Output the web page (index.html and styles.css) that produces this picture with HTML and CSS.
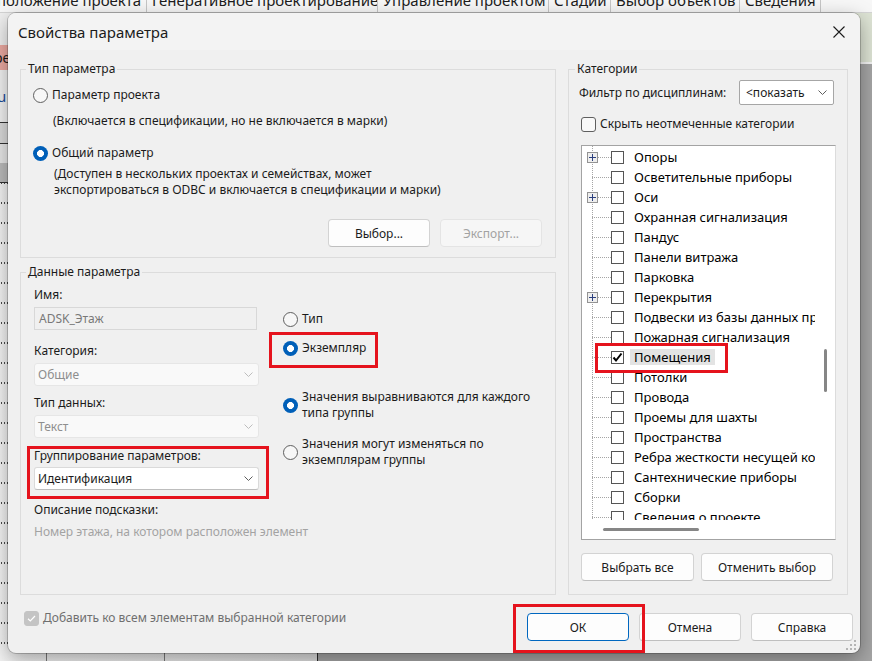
FILE: index.html
```html
<!DOCTYPE html>
<html lang="ru">
<head>
  <meta charset="UTF-8">
  <title>Свойства параметра</title>
  <link rel="stylesheet" href="styles.css">
</head>
<body>
<div class="desktop">
  <div class="ribbon">
    <div class="ribbon-tabs">
      <span class="rtab t1">положение проекта</span>
      <span class="rtab t2">Генеративное проектирование</span>
      <span class="rtab t3">Управление проектом</span>
      <span class="rtab t4">Стадии</span>
      <span class="rtab t5">Выбор объектов</span>
      <span class="rtab t6">Сведения</span>
      <span class="rtab t7"></span>
    </div>
  </div>
  <div class="workspace">
    <div class="browser">
      <div class="b-top"></div>
      <div class="b-pink">ре</div>
      <div class="b-blank">u</div>
      <div class="b-band1"></div>
      <div class="b-band2"></div>
      <div class="b-band3"></div>
      <div class="b-table"></div>
    </div>
    <div class="canvas">
      <div class="c-top"></div>
    </div>
  </div>

  <div class="dialog">
    <div class="titlebar">
      <span class="title">Свойства параметра</span>
      <svg class="close" width="12" height="12" viewBox="0 0 12 12"><path d="M0.5 0.5L11.5 11.5M11.5 0.5L0.5 11.5" stroke="#1b1b1b" stroke-width="1.1"/></svg>
    </div>
    <div class="dialog-body">
      <div class="columns">
        <div class="col-left">
          <fieldset class="group group-type">
            <legend>Тип параметра</legend>
            <label class="radio-row r-project"><span class="radio"></span>Параметр проекта</label>
            <p class="hint h-project">(Включается в спецификации, но не включается в марки)</p>
            <label class="radio-row r-shared"><span class="radio checked"></span>Общий параметр</label>
            <p class="hint h-shared">(Доступен в нескольких проектах и семействах, может<br>экспортироваться в ODBC и включается в спецификации и марки)</p>
            <div class="btn-row">
              <button class="btn">Выбор...</button>
              <button class="btn" disabled>Экспорт...</button>
            </div>
          </fieldset>

          <fieldset class="group group-data">
            <legend>Данные параметра</legend>
            <div class="data-grid">
              <div class="data-fields">
                <div class="field-label l-name">Имя:</div>
                <div class="textbox">ADSK_Этаж</div>
                <div class="field-label l-cat">Категория:</div>
                <div class="combo disabled">Общие<svg class="chev" width="9" height="5" viewBox="0 0 9 5"><path d="M0.5 0.5L4.5 4.5L8.5 0.5" fill="none" stroke="currentColor"/></svg></div>
                <div class="field-label l-type">Тип данных:</div>
                <div class="combo disabled">Текст<svg class="chev" width="9" height="5" viewBox="0 0 9 5"><path d="M0.5 0.5L4.5 4.5L8.5 0.5" fill="none" stroke="currentColor"/></svg></div>
                <div class="marked mark-group">
                  <div class="field-label">Группирование параметров:</div>
                  <div class="combo">Идентификация<svg class="chev" width="9" height="5" viewBox="0 0 9 5"><path d="M0.5 0.5L4.5 4.5L8.5 0.5" fill="none" stroke="currentColor"/></svg></div>
                </div>
                <div class="field-label l-desc">Описание подсказки:</div>
                <div class="placeholder">Номер этажа, на котором расположен элемент</div>
              </div>
              <div class="data-options">
                <label class="radio-row o-type"><span class="radio"></span>Тип</label>
                <label class="radio-row o-inst marked mark-inst"><span class="radio checked"></span>Экземпляр</label>
                <label class="radio-row multi o-align"><span class="radio checked"></span><span>Значения выравниваются для каждого<br>типа группы</span></label>
                <label class="radio-row multi o-vary"><span class="radio"></span><span>Значения могут изменяться по<br>экземплярам группы</span></label>
              </div>
            </div>
          </fieldset>
        </div>

        <fieldset class="group group-cats">
          <legend>Категории</legend>
          <div class="filter-row">
            <span>Фильтр по дисциплинам:</span>
            <div class="combo filter">&lt;показать<svg class="chev" width="9" height="5" viewBox="0 0 9 5"><path d="M0.5 0.5L4.5 4.5L8.5 0.5" fill="none" stroke="currentColor"/></svg></div>
          </div>
          <label class="check-row hide-row"><span class="checkbox"></span>Скрыть неотмеченные категории</label>
          <div class="tree">
            <div class="tree-view">
              <div class="tree-items">
                <div class="node"><span class="gutter"><svg class="plus" width="11" height="11" viewBox="0 0 11 11"><rect x="0.5" y="0.5" width="10" height="10" fill="#eeeeee" stroke="#939393"/><path d="M2 5.5H9M5.5 2V9" stroke="#2b3f7e"/></svg></span><span class="box"></span><span class="name">Опоры</span></div>
                <div class="node"><span class="gutter"></span><span class="box"></span><span class="name">Осветительные приборы</span></div>
                <div class="node"><span class="gutter"><svg class="plus" width="11" height="11" viewBox="0 0 11 11"><rect x="0.5" y="0.5" width="10" height="10" fill="#eeeeee" stroke="#939393"/><path d="M2 5.5H9M5.5 2V9" stroke="#2b3f7e"/></svg></span><span class="box"></span><span class="name">Оси</span></div>
                <div class="node"><span class="gutter"></span><span class="box"></span><span class="name">Охранная сигнализация</span></div>
                <div class="node"><span class="gutter"></span><span class="box"></span><span class="name">Пандус</span></div>
                <div class="node"><span class="gutter"></span><span class="box"></span><span class="name">Панели витража</span></div>
                <div class="node"><span class="gutter"></span><span class="box"></span><span class="name">Парковка</span></div>
                <div class="node"><span class="gutter"><svg class="plus" width="11" height="11" viewBox="0 0 11 11"><rect x="0.5" y="0.5" width="10" height="10" fill="#eeeeee" stroke="#939393"/><path d="M2 5.5H9M5.5 2V9" stroke="#2b3f7e"/></svg></span><span class="box"></span><span class="name">Перекрытия</span></div>
                <div class="node"><span class="gutter"></span><span class="box"></span><span class="name">Подвески из базы данных производителя</span></div>
                <div class="node"><span class="gutter"></span><span class="box"></span><span class="name">Пожарная сигнализация</span></div>
                <div class="node current marked mark-room"><span class="gutter"></span><span class="box"><svg width="11" height="11" viewBox="0 0 11 11"><path d="M1.5 5.5L4 8.5L9.5 1.5" fill="none" stroke="#000" stroke-width="2"/></svg></span><span class="name">Помещения</span></div>
                <div class="node"><span class="gutter"></span><span class="box"></span><span class="name">Потолки</span></div>
                <div class="node"><span class="gutter"></span><span class="box"></span><span class="name">Провода</span></div>
                <div class="node"><span class="gutter"></span><span class="box"></span><span class="name">Проемы для шахты</span></div>
                <div class="node"><span class="gutter"></span><span class="box"></span><span class="name">Пространства</span></div>
                <div class="node"><span class="gutter"></span><span class="box"></span><span class="name">Ребра жесткости несущей конструкции</span></div>
                <div class="node"><span class="gutter"></span><span class="box"></span><span class="name">Сантехнические приборы</span></div>
                <div class="node"><span class="gutter"></span><span class="box"></span><span class="name">Сборки</span></div>
                <div class="node"><span class="gutter"></span><span class="box"></span><span class="name">Сведения о проекте</span></div>
              </div>
            </div>
            <div class="vscroll"><span class="thumb"></span></div>
            <div class="hscroll"><span class="thumb"></span></div>
            <div class="corner"></div>
          </div>
          <div class="cat-buttons">
            <button class="btn b-all">Выбрать все</button>
            <button class="btn b-none">Отменить выбор</button>
          </div>
        </fieldset>
      </div>

      <div class="footer">
        <label class="check-row disabled"><span class="checkbox checked"><svg width="15" height="15" viewBox="0 0 15 15"><path d="M4 7.8L6.3 10L11 5" fill="none" stroke="#fff" stroke-width="1.2"/></svg></span>Добавить ко всем элементам выбранной категории</label>
        <div class="footer-buttons">
          <span class="marked mark-ok"><button class="btn default">ОК</button></span>
          <button class="btn">Отмена</button>
          <button class="btn">Справка</button>
        </div>
      </div>
    </div>
    <svg class="grip" width="11" height="11" viewBox="0 0 11 11">
      <rect x="8" y="0" width="2" height="2" fill="#b4b4b4"/>
      <rect x="4" y="4" width="2" height="2" fill="#b4b4b4"/>
      <rect x="8" y="4" width="2" height="2" fill="#b4b4b4"/>
      <rect x="0" y="8" width="2" height="2" fill="#b4b4b4"/>
      <rect x="4" y="8" width="2" height="2" fill="#b4b4b4"/>
      <rect x="8" y="8" width="2" height="2" fill="#b4b4b4"/>
    </svg>
  </div>
</div>
</body>
</html>
```

FILE: styles.css
```css
* {
  box-sizing: border-box;
}
html, body {
  margin: 0;
  padding: 0;
}
body {
  font-family: "Noto Sans", "Liberation Sans", sans-serif;
  font-size: 12px;
  line-height: 16px;
  color: #1b1b1b;
}
.desktop {
  position: relative;
  width: 872px;
  height: 661px;
  overflow: hidden;
  background: #a4a4a4;
}

/* app behind the dialog */
.ribbon {
  height: 13px;
  overflow: hidden;
  background: #f7f7f7;
  border-bottom: 1px solid #d4d4d4;
}
.ribbon-tabs {
  display: flex;
  margin-top: -10px;
}
.rtab {
  flex: none;
  height: 30px;
  padding-left: 5px;
  font-size: 15px;
  line-height: 20px;
  white-space: nowrap;
  overflow: hidden;
  border-right: 1px solid #c6c6c6;
  color: #1d1d1d;
}
.t1 { width: 147px; padding-left: 0; text-indent: -3px; }
.t2 { width: 231px; }
.t3 { width: 171px; }
.t4 { width: 62px; }
.t5 { width: 129px; }
.t6 { width: 81px; }
.t7 { flex: 1; border-right: none; }

.workspace {
  display: flex;
  height: 648px;
}
.browser {
  width: 318px;
  display: flex;
  flex-direction: column;
  background: #ececec;
  border-right: 1px solid #2a2a2a;
}
.b-top { height: 32px; background: #efefef; }
.b-pink {
  height: 25px;
  background: #eba9a1;
  font-size: 14px;
  line-height: 25px;
  text-indent: -6px;
  overflow: hidden;
}
.b-blank {
  height: 52px;
  background: #f1f1f1;
  color: #1d4f9a;
  font-size: 15px;
  line-height: 52px;
  text-indent: -3px;
  overflow: hidden;
}
.b-band1 {
  height: 22px;
  background: #dadada;
  border-top: 1px solid #333;
  border-bottom: 1px solid #333;
}
.b-band2 { height: 19px; background: #e7e7e7; }
.b-band3 {
  height: 20px;
  background: #bbbbbb;
  border-bottom: 1px solid #333;
}
.b-table {
  flex: 1;
  background:
    radial-gradient(circle, #4a4a4a 0.7px, transparent 1px) 0 10px / 3px 20px,
    linear-gradient(to right, transparent 46px, #7a7a7a 46px 47px, transparent 47px 164px, #7a7a7a 164px 165px, transparent 165px),
    linear-gradient(to right, #f3f3f3, #dedede);
}
.canvas {
  flex: 1;
  background: #a5a5a5;
}
.c-top {
  height: 51px;
  background: #dde3d4;
  border-bottom: 2px solid #f3f3f3;
}

/* dialog window */
.dialog {
  position: absolute;
  left: 8px;
  top: 13px;
  width: 852px;
  height: 640px;
  display: flex;
  flex-direction: column;
  background: #f0f0f0;
  border-radius: 8px;
  overflow: hidden;
  box-shadow: 0 0 0 1px rgba(0, 0, 0, 0.2), 0 6px 20px rgba(0, 0, 0, 0.35);
}
.titlebar {
  flex: none;
  height: 37px;
  display: flex;
  align-items: center;
  justify-content: space-between;
  padding: 0 15px 0 10px;
  background: #f3f3f3;
}
.title {
  font-size: 15px;
  color: #1b1b1b;
}
.dialog-body {
  flex: 1;
  display: flex;
  flex-direction: column;
  padding: 11px 12px 0;
}
.columns {
  display: grid;
  grid-template-columns: 536px 280px;
  column-gap: 12px;
  height: 534px;
}
.col-left {
  display: flex;
  flex-direction: column;
  gap: 6px;
}
.group {
  margin: 0;
  min-width: 0;
  border: 1px solid #dcdcdc;
}
.group legend {
  padding: 0 2px;
  line-height: 16px;
}
.group-type {
  padding: 0 13px 10px 12px;
}
.group-type legend { margin-left: -7px; }
.group-data {
  flex: 1;
  padding: 0 13px;
}
.group-data legend { margin-left: -8px; }
.group-cats {
  padding: 0 13px 13px 10px;
}
.group-cats legend { margin-left: -4px; }

/* radios, checks */
.radio-row {
  display: flex;
  align-items: center;
  gap: 4px;
  height: 20px;
}
.radio-row.multi { height: 32px; }
.radio {
  flex: none;
  width: 15px;
  height: 15px;
  border-radius: 50%;
  border: 1px solid #5f5f5f;
  background: #f7f7f7;
}
.radio.checked {
  border: none;
  background: radial-gradient(circle closest-side, #fff 42%, #005fb8 50%);
}
.check-row {
  display: flex;
  align-items: center;
  gap: 4px;
  height: 16px;
}
.checkbox {
  flex: none;
  width: 15px;
  height: 15px;
  border: 1px solid #5f5f5f;
  border-radius: 3px;
  background: #f9f9f9;
}
.checkbox svg { display: block; margin: -1px; }
.check-row.disabled { color: #6f6f6f; }
.checkbox.checked {
  border-color: #c4c4c4;
  background: #c4c4c4;
}

.r-project { margin-top: 8px; }
.h-project { margin: 8px 0 0 20px; }
.r-shared { margin-top: 14px; }
.h-shared { margin: 3px 0 0 21px; }
.btn-row {
  display: flex;
  justify-content: flex-end;
  gap: 10px;
  margin-top: 21px;
}
.btn {
  width: 102px;
  height: 28px;
  padding: 0;
  font-family: inherit;
  font-size: 12px;
  color: #1b1b1b;
  background: #fdfdfd;
  border: 1px solid #d3d3d3;
  border-bottom-color: #bfbfbf;
  border-radius: 4px;
}
.btn:disabled {
  color: #a2a2a2;
  background: #f6f6f6;
  border-color: #e4e4e4;
}
.btn.default {
  border-color: #0067c0;
}

/* parameter data */
.data-grid {
  display: grid;
  grid-template-columns: 225px 1fr;
  column-gap: 24px;
  align-items: start;
}
.field-label { line-height: 16px; }
.l-name { margin-top: 7px; }
.l-cat { margin-top: 13px; }
.l-type { margin-top: 9px; }
.mark-group { margin-top: 10px; }
.l-desc { margin-top: 12px; }
.textbox {
  width: 223px;
  height: 23px;
  margin-top: 4px;
  padding-left: 4px;
  line-height: 21px;
  color: #787878;
  background: #f0f0f0;
  border: 1px solid #d8d8d8;
}
.combo {
  height: 23px;
  margin-top: 4px;
  padding: 0 5px 0 3px;
  display: flex;
  align-items: center;
  justify-content: space-between;
  color: #1b1b1b;
  background: #ffffff;
  border: 1px solid #dadada;
  border-bottom-color: #bdbdbd;
  border-radius: 3px;
}
.combo .chev {
  flex: none;
  color: #5e5e5e;
}
.combo.disabled {
  color: #8e8e8e;
  background: #f9f9f9;
  border-color: #e6e6e6;
}
.combo.disabled .chev { color: #bdbdbd; }
.mark-group .combo { margin-top: 3px; }
.placeholder {
  margin-top: 6px;
  color: #a3a3a3;
  white-space: nowrap;
}
.o-type { margin-top: 29px; }
.o-inst { margin-top: 9px; }
.o-align { margin-top: 31px; }
.o-vary { margin-top: 15px; }

/* red annotation frames */
.marked {
  position: relative;
}
.marked::after {
  content: "";
  position: absolute;
  border: 3px solid #e5131d;
  pointer-events: none;
}
.mark-group::after { left: -7px; top: -2px; right: -10px; bottom: -9px; }
.mark-inst::after { left: -14px; top: -6px; width: 103px; height: 30px; }
.mark-room::after { left: 13px; top: -4px; width: 127px; height: 24px; }
.mark-ok { display: block; }
.mark-ok::after { left: -14px; top: -9px; width: 126px; height: 43px; }

/* categories */
.filter-row {
  display: flex;
  align-items: center;
  justify-content: space-between;
  height: 25px;
  margin-top: 3px;
}
.combo.filter {
  width: 95px;
  height: 25px;
  margin-top: 0;
  padding: 0 6px;
  border: 1px solid #a6a6a6;
  border-radius: 2px;
}
.hide-row {
  margin-top: 11px;
  padding-left: 2px;
}
.tree {
  display: grid;
  grid-template-columns: 1fr 20px;
  grid-template-rows: 1fr 19px;
  width: 255px;
  height: 395px;
  margin: 13px 0 0 2px;
  background: #ffffff;
  border: 1px solid #a3a3a3;
  border-right-color: #dcdcdc;
}
.tree-view {
  overflow: hidden;
  background: repeating-linear-gradient(to bottom, #a5a5a5 0 1px, transparent 1px 2px) 10px 0 / 1px 100% no-repeat;
}
.tree-items { padding-top: 1px; }
.node {
  display: flex;
  align-items: center;
  height: 20px;
  white-space: nowrap;
  font-size: 13px;
  color: #000;
}
.gutter {
  flex: none;
  width: 29px;
  height: 20px;
  display: flex;
  align-items: center;
  background: repeating-linear-gradient(to right, #a5a5a5 0 1px, transparent 1px 2px) 10px 10px / 19px 1px no-repeat;
}
.plus {
  display: block;
  margin-left: 5px;
}
.box {
  flex: none;
  width: 13px;
  height: 13px;
  border: 1px solid #555;
  background: #fff;
}
.box svg { display: block; }
.name {
  margin-left: 6px;
  padding: 0 4px;
  line-height: 16px;
}
.node.current .name { background: #e3e3e3; }
.vscroll .thumb {
  display: block;
  width: 3px;
  height: 43px;
  margin: 203px 0 0 9px;
  border-radius: 2px;
  background: #868686;
}
.hscroll .thumb {
  display: block;
  width: 96px;
  height: 3px;
  margin: 8px 0 0 21px;
  border-radius: 2px;
  background: #868686;
}
.cat-buttons {
  display: flex;
  gap: 7px;
  margin: 13px 0 0 2px;
}
.b-all { width: 113px; }
.b-none { width: 132px; }

/* bottom row */
.footer {
  flex: 1;
  display: flex;
  justify-content: space-between;
  align-items: flex-start;
  margin-right: -5px;
  padding: 18px 0 0 4px;
}
.footer .check-row { margin-top: -3px; }
.footer-buttons {
  display: flex;
  gap: 10px;
}
.grip {
  position: absolute;
  right: 3px;
  bottom: 2px;
}
```
